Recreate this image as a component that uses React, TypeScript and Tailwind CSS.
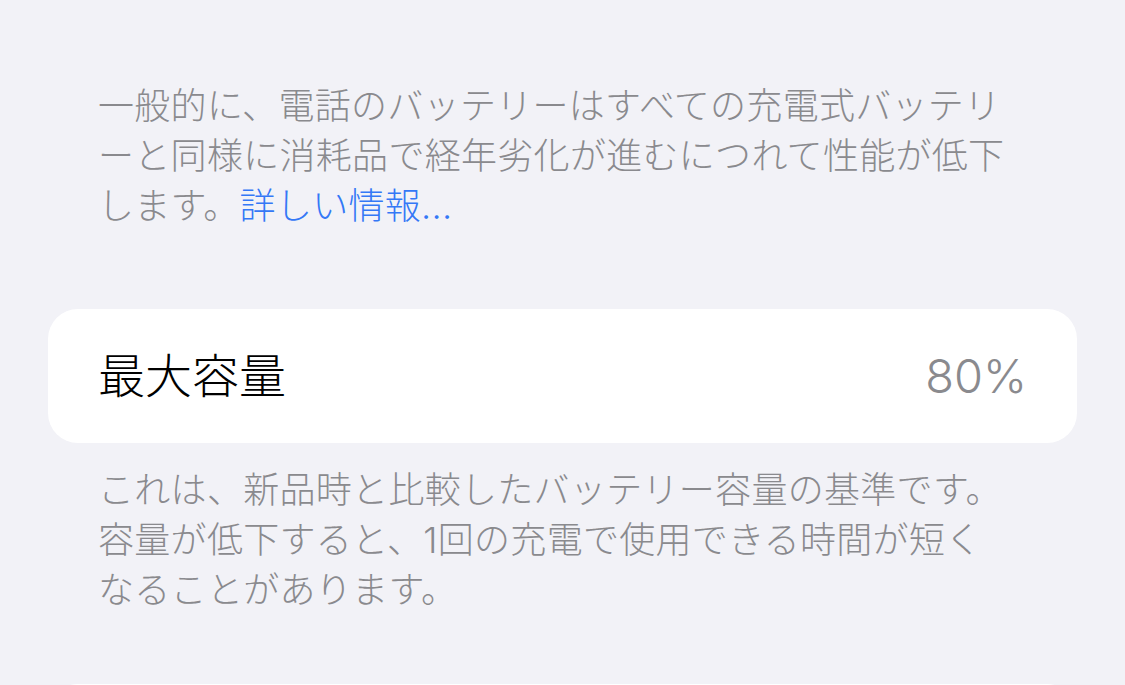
const font = { fontFamily: '"Inter", "Noto Sans CJK JP", sans-serif' }

function Note({ lines }: { lines: React.ReactNode[] }) {
  return (
    <div className="pl-[50px] text-[36px] leading-[50px] font-light text-[#8a8a8e] tracking-[0.3px]">
      {lines.map((line, i) => (
        <div key={i} className="whitespace-nowrap">
          {line}
        </div>
      ))}
    </div>
  )
}

export default function App() {
  return (
    <div className="h-[685px] overflow-hidden bg-[#f2f2f7] px-12 pt-[81px]" style={font}>
      {/* Intro text */}
      <Note
        lines={[
          '一般的に、電話のバッテリーはすべての充電式バッテリ',
          'ーと同様に消耗品で経年劣化が進むにつれて性能が低下',
          <>
            します。<span className="text-[#3478f6]">詳しい情報...</span>
          </>,
        ]}
      />

      {/* Maximum capacity row */}
      <div className="mt-[78px] flex h-[134px] items-center justify-between rounded-[30px] bg-white px-[50px] font-light">
        <span className="text-[47px] text-black">最大容量</span>
        <span className="text-[47px] text-[#8a8a8e]">80%</span>
      </div>

      <div className="mt-[22px]">
        <Note
          lines={[
            'これは、新品時と比較したバッテリー容量の基準です。',
            '容量が低下すると、1回の充電で使用できる時間が短く',
            'なることがあります。',
          ]}
        />
      </div>

      {/* Next group, cut off by the bottom edge */}
      <div className="mt-[69px] h-[134px] rounded-[30px] bg-white" />
    </div>
  )
}
